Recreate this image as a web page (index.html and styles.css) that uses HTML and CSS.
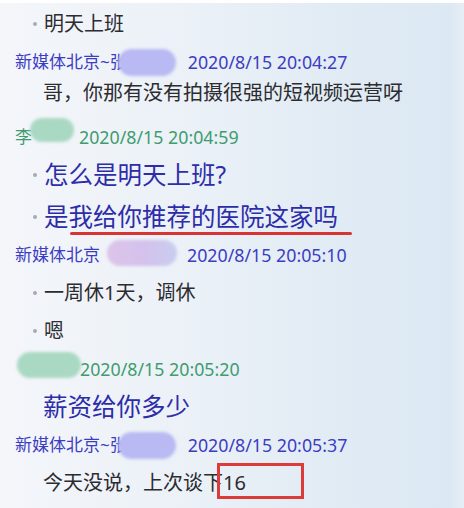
FILE: index.html
```html
<!DOCTYPE html>
<html lang="zh-CN">
<head>
<meta charset="utf-8">
<title>聊天记录</title>
<link rel="stylesheet" href="styles.css">
</head>
<body>
<div class="chat">
  <div class="msg bullet">明天上班</div>

  <div class="head blue"><span class="name">新媒体北京~张</span><span class="blob lav b1"></span><span class="time">2020/8/15 20:04:27</span></div>
  <div class="msg tight">哥，你那有没有拍摄很强的短视频运营呀</div>

  <div class="head green loose"><span class="name">李</span><span class="blob mint b2"></span><span class="time">2020/8/15 20:04:59</span></div>
  <div class="msg bullet big">怎么是明天上班?</div>
  <div class="msg bullet big more">是<span class="underline">我给你推荐的医院这家吗</span></div>

  <div class="head blue"><span class="name">新媒体北京</span><span class="blob pink b3"></span><span class="time">2020/8/15 20:05:10</span></div>
  <div class="msg bullet">一周休1天，调休</div>
  <div class="msg bullet">嗯</div>

  <div class="head green"><span class="blob mint b4"></span><span class="time">2020/8/15 20:05:20</span></div>
  <div class="msg big">薪资给你多少</div>

  <div class="head blue"><span class="name">新媒体北京~张</span><span class="blob lav b1"></span><span class="time">2020/8/15 20:05:37</span></div>
  <div class="msg">今天没说，上次谈下<span class="boxed">16</span></div>
</div>
</body>
</html>
```

FILE: styles.css
```css
html, body {
  margin: 0;
  padding: 0;
  height: 508px;
  overflow: hidden;
}

body {
  background:
    linear-gradient(to bottom, #ffffff 0, #ffffff 3px, transparent 3px),
    linear-gradient(to right, #f4f6fa 0%, #ebf1f7 40%, #dfeaf4 80%, #dce8f3 97%, #e6eef5 100%);
  font-family: "Noto Sans", "Noto Sans CJK SC", sans-serif;
}

.chat {
  display: flex;
  flex-direction: column;
  gap: 8px;
  padding-top: 9px;
}

.msg {
  display: flex;
  align-items: center;
  height: 30px;
  line-height: 30px;
  padding-left: 43px;
  font-size: 20px;
  color: #2c2c30;
  white-space: nowrap;
}

.msg.bullet {
  padding-left: 33px;
}

.msg.bullet::before {
  content: "";
  width: 4px;
  height: 4px;
  border-radius: 50%;
  background: #a9abb3;
  margin-right: 7px;
  flex: none;
}

.msg.big {
  font-size: 24.5px;
  color: #2d2daa;
}

.tight { margin-top: -7px; }
.loose { margin-top: 6px; }
.more { margin-top: 4px; }

.head {
  display: flex;
  align-items: center;
  height: 30px;
  line-height: 30px;
  padding-left: 15px;
  font-size: 17px;
  white-space: nowrap;
}

.head.blue { color: #3d3dc2; }
.head.green { color: #3f9c70; }

.time {
  font-size: 17.8px;
}

.blob {
  display: inline-block;
  flex: none;
  border-radius: 14px;
  filter: blur(1.5px);
}

.lav { background: #b9b9f3; }
.mint { background: #a9d9c3; }
.pink { background: linear-gradient(to right, #ddc3ea 0%, #d3c2ec 55%, #c9cdef 100%); }

.b1 { width: 58px; height: 27px; margin-left: -9px; margin-right: 12px; }
.b2 { width: 44px; height: 24px; margin-left: -2px; margin-right: 5px; margin-top: -14px; }
.b3 { width: 70px; height: 26px; margin-left: 7px; margin-right: 10px; margin-top: -4px; }
.b4 { width: 64px; height: 26px; margin-left: 2px; margin-right: -1px; margin-top: -8px; }

.underline {
  position: relative;
}

.underline::after {
  content: "";
  position: absolute;
  left: 1px;
  right: -14px;
  bottom: -3px;
  height: 3px;
  border-radius: 2px;
  background: #d83434;
}

.boxed {
  position: relative;
}

.boxed::after {
  content: "";
  position: absolute;
  left: -6px;
  top: -5px;
  width: 81px;
  height: 30px;
  border: 3px solid #dd3a3a;
}
```
